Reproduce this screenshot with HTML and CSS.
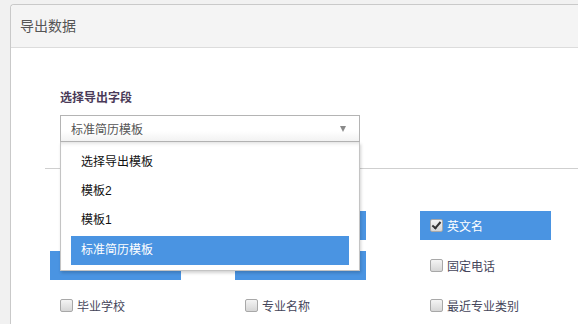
FILE: index.html
```html
<!DOCTYPE html>
<html lang="zh-CN">
<head>
  <meta charset="UTF-8">
  <title>导出数据</title>
  <link rel="stylesheet" href="styles.css">
</head>
<body>
  <div class="panel">
    <div class="panel-head">导出数据</div>
    <div class="panel-body">
      <div class="field">
        <div class="field-label">选择导出字段</div>
        <div class="select-wrap">
          <div class="select">
            <span>标准简历模板</span>
            <span class="arrow"></span>
          </div>
          <ul class="dropdown">
            <li>选择导出模板</li>
            <li>模板2</li>
            <li>模板1</li>
            <li class="active">标准简历模板</li>
          </ul>
        </div>
      </div>
      <div class="divider"></div>
      <div class="checks">
        <div class="check"></div>
        <div class="check on"></div>
        <label class="check on"><span class="box checked"></span>英文名</label>
        <div class="check on"></div>
        <div class="check on"></div>
        <label class="check"><span class="box"></span>固定电话</label>
        <label class="check"><span class="box"></span>毕业学校</label>
        <label class="check"><span class="box"></span>专业名称</label>
        <label class="check"><span class="box"></span>最近专业类别</label>
      </div>
    </div>
  </div>
</body>
</html>
```

FILE: styles.css
```css
body {
  margin: 0;
  background: #f1f1f1;
  font-family: "Liberation Sans", "Noto Sans CJK SC", sans-serif;
  font-size: 12px;
  overflow: hidden;
}
.panel {
  margin: 4px 0 0 10px;
  border: 1px solid #c9c9c9;
  border-right: none;
  border-radius: 4px 0 0 0;
  background: #fff;
  height: 330px;
}
.panel-head {
  height: 42px;
  line-height: 42px;
  padding-left: 9px;
  font-size: 14px;
  color: #555;
  background: #f4f4f4;
  border-bottom: 1px solid #dcdcdc;
  border-radius: 4px 0 0 0;
}
.panel-body {
  padding-top: 42px;
}
.field {
  padding-left: 49px;
}
.field-label {
  font-weight: bold;
  color: #4a3a58;
  line-height: 16px;
  margin-bottom: 9px;
}
.select-wrap {
  position: relative;
  width: 300px;
}
.select {
  height: 25px;
  border: 1px solid #b4b4b4;
  background: linear-gradient(#fff, #fff 60%, #f2f2f2);
  display: flex;
  align-items: center;
  justify-content: space-between;
  padding: 0 13px 0 10px;
  color: #555;
}
.arrow {
  width: 0;
  height: 0;
  border-left: 3.5px solid transparent;
  border-right: 3.5px solid transparent;
  border-top: 6px solid #8a8a8a;
}
.dropdown {
  position: absolute;
  top: 27px;
  left: 0;
  margin: 0;
  padding: 6px 10px 5px;
  box-sizing: border-box;
  width: 300px;
  list-style: none;
  background: #fff;
  border: 1px solid #c4c4c4;
  border-top: none;
  box-shadow: 1px 2px 3px rgba(0, 0, 0, 0.18), inset 0 4px 4px -3px rgba(0, 0, 0, 0.15);
  z-index: 10;
}
.dropdown li {
  height: 29px;
  line-height: 29px;
  padding-left: 10px;
  color: #111;
}
.dropdown li.active {
  background: #4a94e2;
  color: #fff;
  margin-top: 1px;
}
.divider {
  margin: 26px 0 0 34px;
  border-top: 1px solid #cfcfcf;
}
.checks {
  margin: 42px 0 0 39px;
  display: grid;
  grid-template-columns: repeat(3, 131px);
  grid-auto-rows: 29px;
  column-gap: 54px;
  row-gap: 11px;
}
.check {
  display: flex;
  align-items: center;
  padding-left: 10px;
  color: #45455a;
}
.check.on {
  background: #4a94e2;
  color: #fff;
}
.box {
  width: 11px;
  height: 11px;
  border: 1px solid #a8a8a8;
  border-radius: 2px;
  background: linear-gradient(#f4f4f4, #d6d6d6);
  margin-right: 4px;
  position: relative;
}
.box.checked::after {
  content: "";
  position: absolute;
  left: 3px;
  top: 0;
  width: 3px;
  height: 7px;
  border-right: 2px solid #333;
  border-bottom: 2px solid #333;
  transform: rotate(40deg);
}
```
